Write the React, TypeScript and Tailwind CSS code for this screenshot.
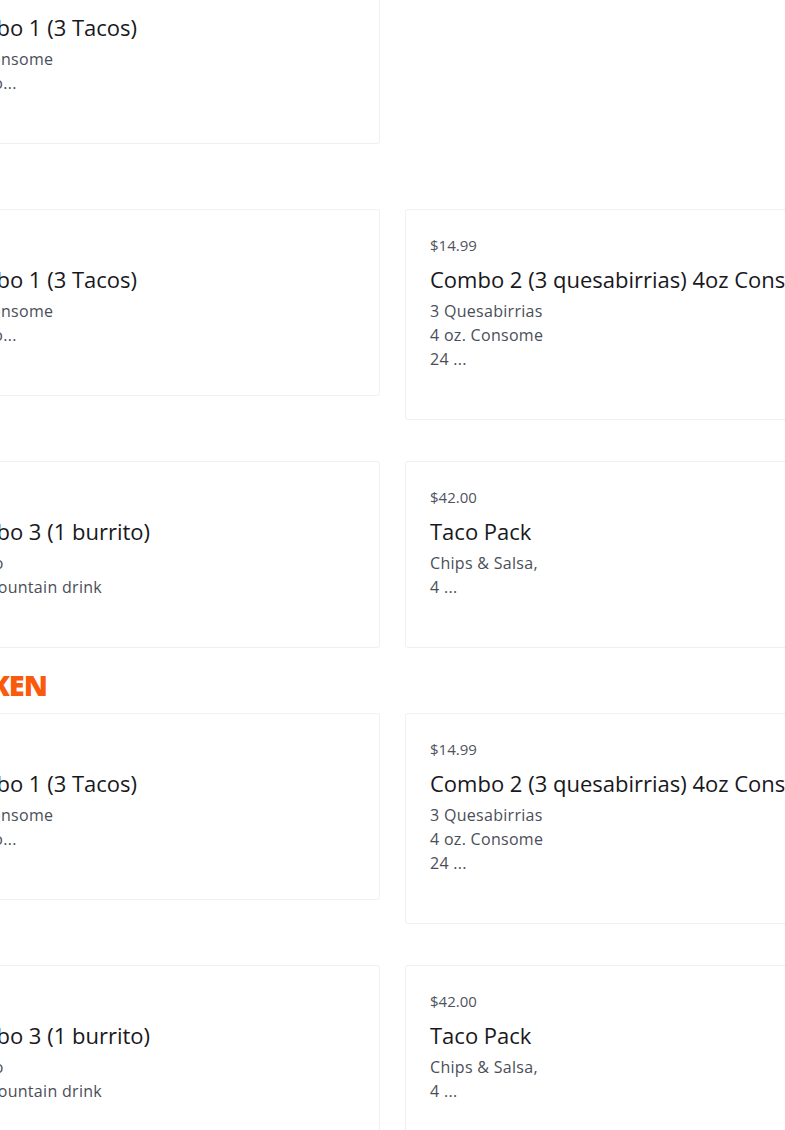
type MenuItem = {
  price: string;
  name: string;
  lines: string[];
};

type Section = {
  title: string;
  items: MenuItem[];
};

const combo1: MenuItem = {
  price: "$12.99",
  name: "Combo 1 (3 Tacos)",
  lines: ["4oz Consome", "Churro..."],
};

const combo2: MenuItem = {
  price: "$14.99",
  name: "Combo 2 (3 quesabirrias) 4oz Consome",
  lines: ["3 Quesabirrias", "4 oz. Consome", "24 ..."],
};

const combo3: MenuItem = {
  price: "$13.99",
  name: "Combo 3 (1 burrito)",
  lines: ["Burrito", "Med. fountain drink"],
};

const tacoPack: MenuItem = {
  price: "$42.00",
  name: "Taco Pack",
  lines: ["Chips & Salsa,", "4 ..."],
};

const sections: Section[] = [
  { title: "BIRRIA", items: [combo1] },
  { title: "BEEF", items: [combo1, combo2, combo3, tacoPack] },
  { title: "CHICKEN", items: [combo1, combo2, combo3, tacoPack] },
];

function ItemCard({ item }: { item: MenuItem }) {
  return (
    <div className="rounded-[3px] border border-[#f0f0f0] bg-white px-6 pt-[23px] pb-[48px]">
      <div className="text-[15px] leading-[24px] text-[#4f535d]">{item.price}</div>
      <div className="mt-[6px] whitespace-nowrap text-[22px] leading-[32px] text-[#18181c]">
        {item.name}
      </div>
      <div className="mt-[4px] text-[16px] leading-[24px] tracking-[0.3px] text-[#4b4e57]">
        {item.lines.map((line, i) => (
          <div key={i} className="whitespace-nowrap">
            {line}
          </div>
        ))}
      </div>
    </div>
  );
}

export default function App() {
  return (
    <div
      className="h-[1130px] w-full overflow-hidden bg-white"
      style={{ fontFamily: '"Open Sans", "Noto Sans", sans-serif' }}
    >
      <div className="ml-[-76px] mt-[-88px] w-[934px]">
        {sections.map((section, si) => (
          <section key={section.title}>
            <h2
              className={`${si === 0 ? "" : "mt-[20px]"} mb-[12px] h-[33px] text-[29px] font-extrabold leading-[33px] tracking-[-1px] text-[#fa5a0c]`}
            >
              {section.title}
            </h2>
            <div className="grid grid-cols-[456px_453px] items-start gap-x-[25px] gap-y-[41px]">
              {section.items.map((item, i) => (
                <ItemCard key={i} item={item} />
              ))}
            </div>
          </section>
        ))}
      </div>
    </div>
  );
}
